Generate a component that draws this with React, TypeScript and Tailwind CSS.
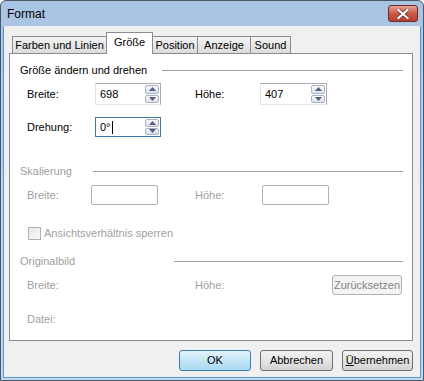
const font = "font-['Liberation_Sans',Arial,sans-serif]";

function Arrow({ down }: { down?: boolean }) {
  return (
    <svg width="7" height="4" viewBox="0 0 7 4">
      <path d={down ? "M0 0 L7 0 L3.5 4 Z" : "M3.5 0 L7 4 L0 4 Z"} fill="#4e5f80" />
    </svg>
  );
}

function SpinBox({ value, className, focused, caret }: { value: string; className: string; focused?: boolean; caret?: boolean }) {
  return (
    <div
      className={`flex bg-white border ${
        focused ? "border-[#3d7bad] border-t-[#3d7bad]" : "border-[#e2e3ea] border-t-[#abadb3] border-r-[#a8a8a8]"
      } ${className}`}
    >
      <div className="flex flex-1 items-center pl-[4px] text-[11px] text-black">
        {value}
        {caret && <span className="ml-[1px] inline-block h-[13px] w-[1px] bg-black" />}
      </div>
      <div className="flex w-[15px] flex-col gap-[1px] py-[1px] pr-[1px]">
        <div className="flex flex-1 items-center justify-center rounded-[2px] border border-[#aab3c2] bg-gradient-to-b from-[#f8f9fb] to-[#dde2e9]">
          <Arrow />
        </div>
        <div className="flex flex-1 items-center justify-center rounded-[2px] border border-[#aab3c2] bg-gradient-to-b from-[#f8f9fb] to-[#dde2e9]">
          <Arrow down />
        </div>
      </div>
    </div>
  );
}

function Header({ label, className, rowClass = "", disabled }: { label: string; className: string; rowClass?: string; disabled?: boolean }) {
  return (
    <div className={`flex h-[14px] items-center pl-[10px] pr-[9px] ${rowClass}`}>
      <div className={`text-[11px] ${disabled ? "text-[#a0a0a0]" : "text-black"} ${className}`}>{label}</div>
      <div className="h-[1px] flex-1 bg-[#a0a0a0]" />
    </div>
  );
}

function Tab({ label, className, active }: { label: string; className: string; active?: boolean }) {
  return (
    <div
      className={`flex items-center justify-center border border-b-0 border-[#898c95] text-[11px] text-black ${
        active
          ? "relative z-10 -mb-[1px] h-[22px] bg-white pb-[3px]"
          : "h-[17px] bg-gradient-to-b from-[#f3f3f3] to-[#dcdcdc] -ml-[1px]"
      } ${className}`}
    >
      {label}
    </div>
  );
}

function Button({ children, className, primary, disabled }: { children: React.ReactNode; className: string; primary?: boolean; disabled?: boolean }) {
  const look = primary
    ? "border-[#3c7fb1] bg-gradient-to-b from-[#e5f4fc] via-[#c4e5f6] to-[#a9d9f2] text-black"
    : disabled
    ? "border-[#adb2b5] bg-[#f4f4f4] text-[#838383]"
    : "border-[#707070] bg-gradient-to-b from-[#f2f2f2] via-[#e6e6e6] to-[#d2d2d2] text-black";
  return (
    <div className={`flex items-center justify-center rounded-[3px] border text-[11px] ${look} ${className}`}>
      {children}
    </div>
  );
}

export default function App() {
  return (
    <div className={`${font} flex h-[381px] w-[424px] flex-col rounded-t-[6px] border border-[#4b5666] bg-gradient-to-b from-[#a9c3e3] via-[#bcd2eb] to-[#c6daef]`}>
      {/* title bar */}
      <div className="flex h-[25px] shrink-0 items-start justify-between pl-[6px] pr-[5px]">
        <span className="mt-[5px] text-[12px] leading-[16px] text-black">Format</span>
        <div className="mt-[4px] flex h-[17px] w-[30px] items-center justify-center rounded-[3px] border border-[#6e2a2a] bg-gradient-to-b from-[#e3a194] via-[#cc5a48] to-[#b8402f]">
          <svg width="12" height="10" viewBox="0 0 12 10">
            <path d="M1.5 1 L10.5 9 M10.5 1 L1.5 9" stroke="#4a1c1c" strokeWidth="3.4" strokeLinecap="square" />
            <path d="M1.5 1 L10.5 9 M10.5 1 L1.5 9" stroke="#ffffff" strokeWidth="2.2" strokeLinecap="square" />
          </svg>
        </div>
      </div>

      {/* client area */}
      <div className="mx-[2px] mb-[2px] flex flex-1 flex-col border border-t-0 border-[#4d9ad4] bg-[#f0f0f0] pl-[5px] pr-[7px] pt-[6px]">
        {/* tabs */}
        <div className="flex items-end pl-[3px]">
          <Tab label="Farben und Linien" className="ml-0 w-[95px]" />
          <Tab label="Größe" active className="-ml-[1px] w-[47px]" />
          <Tab label="Position" className="w-[46px]" />
          <Tab label="Anzeige" className="w-[54px]" />
          <Tab label="Sound" className="w-[41px]" />
        </div>

        {/* panel */}
        <div className="flex h-[288px] flex-col border border-[#898c95] bg-white pt-[9px]">
          <Header label="Größe ändern und drehen" className="w-[142px]" />
          <div className="mt-[6px] flex items-center pl-[17px] text-[11px] text-black">
            <span className="w-[68px]">Breite:</span>
            <SpinBox value="698" className="h-[22px] w-[66px]" />
            <span className="ml-[34px] w-[65px]">Höhe:</span>
            <SpinBox value="407" className="h-[22px] w-[67px]" />
          </div>
          <div className="mt-[12px] flex items-center pl-[17px] text-[11px] text-black">
            <span className="w-[68px]">Drehung:</span>
            <SpinBox value="0°" caret focused className="h-[20px] w-[66px]" />
          </div>

          <Header label="Skalierung" disabled rowClass="mt-[27px]" className="w-[73px]" />
          <div className="mt-[7px] flex items-center pl-[17px] text-[11px] text-[#a0a0a0]">
            <span className="w-[64px]">Breite:</span>
            <div className="h-[20px] w-[67px] rounded-[2px] border border-[#adb2b5] bg-white" />
            <span className="ml-[37px] w-[67px]">Höhe:</span>
            <div className="h-[20px] w-[67px] rounded-[2px] border border-[#adb2b5] bg-white" />
          </div>
          <div className="mt-[21px] flex h-[14px] items-center gap-[3px] pl-[18px] text-[11px] text-[#a0a0a0]">
            <div className="h-[13px] w-[13px] border border-[#b1b1b1] bg-gradient-to-br from-[#e8e8e8] to-[#f8f8f8]" />
            <span>Ansichtsverhältnis sperren</span>
          </div>

          <Header label="Originalbild" disabled rowClass="mt-[14px]" className="w-[154px]" />
          <div className="mt-[7px] flex items-center pl-[17px] text-[11px] text-[#a0a0a0]">
            <span className="w-[168px]">Breite:</span>
            <span className="w-[137px]">Höhe:</span>
            <Button disabled className="h-[20px] w-[70px]">Zurücksetzen</Button>
          </div>
          <div className="mt-[17px] flex h-[14px] items-center pl-[17px] text-[11px] text-[#a0a0a0]">
            <span>Datei:</span>
          </div>
        </div>

        {/* dialog buttons */}
        <div className="mt-[9px] flex justify-end gap-[9px]">
          <Button primary className="h-[21px] w-[72px]">OK</Button>
          <Button className="h-[21px] w-[73px]">Abbrechen</Button>
          <Button className="h-[21px] w-[71px]">
            <span>
              <span className="underline">Ü</span>bernehmen
            </span>
          </Button>
        </div>
      </div>
    </div>
  );
}
